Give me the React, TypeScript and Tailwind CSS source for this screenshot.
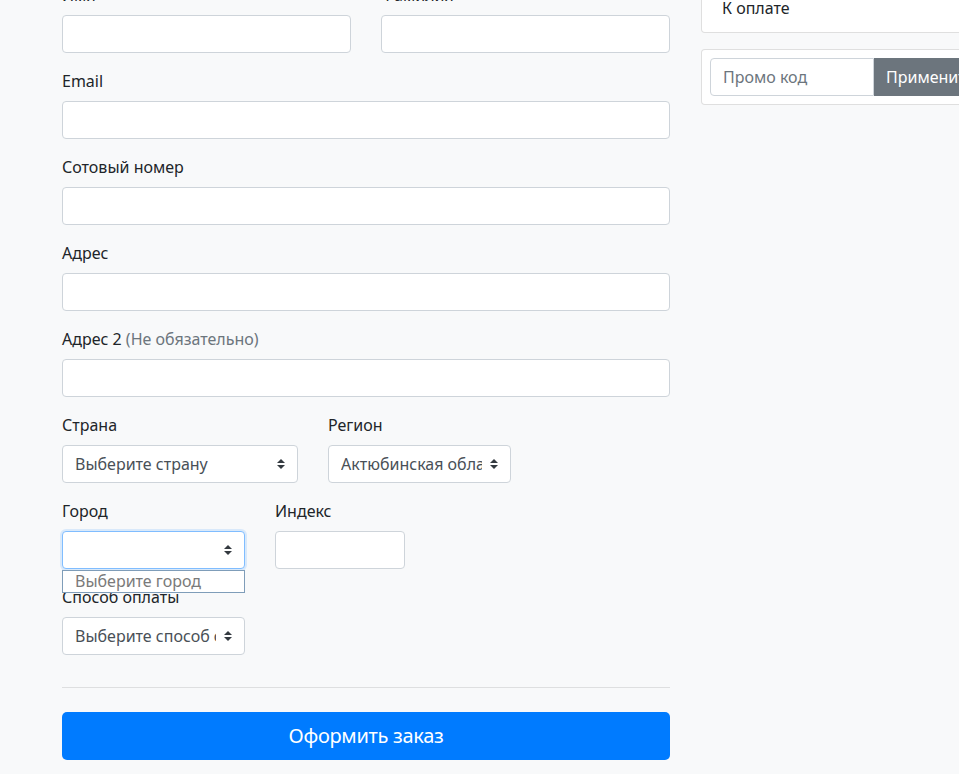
import React from "react";

const font = { fontFamily: '"Noto Sans", "Liberation Sans", sans-serif' };

function Chevrons() {
  return (
    <svg width="8" height="10" viewBox="0 0 4 5" className="shrink-0 ml-2">
      <path d="M2 0L0 2h4zm0 5L0 3h4z" fill="#343a40" />
    </svg>
  );
}

function Field({ label, muted, className }: { label: string; muted?: string; className?: string }) {
  return (
    <div className={"mb-4 " + (className || "")}>
      <label className="mb-2 block text-[16px] leading-6 text-[#212529]">
        {label} {muted && <span className="text-[#6c757d]">{muted}</span>}
      </label>
      <div className="h-[38px] rounded-[4px] border border-[#ced4da] bg-white" />
    </div>
  );
}

function SelectField({
  label,
  value,
  className,
  focused,
  children,
}: {
  label: string;
  value?: string;
  className?: string;
  focused?: boolean;
  children?: React.ReactNode;
}) {
  return (
    <div className={"mb-4 relative " + (className || "")}>
      <label className="mb-2 block text-[16px] leading-6 text-[#212529]">{label}</label>
      <div
        className={
          "flex h-[38px] items-center rounded-[4px] border bg-white pl-3 pr-3 " +
          (focused ? "border-[#80bdff] shadow-[0_0_0_2px_rgba(0,123,255,0.12)]" : "border-[#ced4da]")
        }
      >
        <span className="min-w-0 flex-1 overflow-hidden whitespace-nowrap text-[16px] text-[#495057]">
          {value}
        </span>
        <Chevrons />
      </div>
      {children}
    </div>
  );
}

export default function App() {
  return (
    <div className="h-[774px] w-[959px] overflow-hidden bg-[#f8f9fa]" style={font}>
      <div className="-mt-[17px] flex">
        <div className="ml-[62px] w-[608px] shrink-0">
          <div className="grid grid-cols-2 gap-x-[30px]">
            <Field label="Имя" />
            <Field label="Фамилия" />
          </div>
          <Field label="Email" />
          <Field label="Сотовый номер" />
          <Field label="Адрес" />
          <Field label="Адрес 2" muted="(Не обязательно)" />
          <div className="flex gap-[30px]">
            <SelectField label="Страна" value="Выберите страну" className="w-[236px]" />
            <SelectField label="Регион" value="Актюбинская область" className="w-[183px]" />
          </div>
          <div className="flex gap-[30px]">
            <SelectField label="Город" value="" className="w-[183px] z-10" focused>
              <div className="absolute left-0 right-0 top-[71px] h-[23px] border border-[#7f9db9] bg-white pl-3 text-[16px] leading-[20px] text-[#7a7a7a]">
                Выберите город
              </div>
            </SelectField>
            <Field label="Индекс" className="w-[130px]" />
          </div>
          <div className="flex">
            <SelectField label="Способ оплаты" value="Выберите способ оплаты" className="w-[183px]" />
          </div>
          <hr className="mb-6 mt-4 border-t border-[rgba(0,0,0,0.1)]" />
          <button className="flex h-[48px] w-full items-center justify-center rounded-[5px] bg-[#007bff] text-[20px] tracking-[-0.3px] text-white">
            Оформить заказ
          </button>
        </div>
        <div className="ml-[31px] w-[320px] shrink-0">
          <div className="mb-4 rounded-[4px] border border-[rgba(0,0,0,0.125)] bg-white">
            <div className="py-3 pl-[20px] text-[16px] leading-6 text-[#212529]">К оплате</div>
          </div>
          <div className="rounded-[4px] border border-[rgba(0,0,0,0.125)] bg-white p-2">
            <div className="flex h-[38px]">
              <div className="flex w-[164px] items-center rounded-l-[4px] border border-[#ced4da] bg-white px-3 text-[16px] text-[#6c757d]">
                Промо код
              </div>
              <button className="flex items-center rounded-r-[4px] bg-[#6c757d] px-3 text-[16px] text-white">
                Применить
              </button>
            </div>
          </div>
        </div>
      </div>
    </div>
  );
}
